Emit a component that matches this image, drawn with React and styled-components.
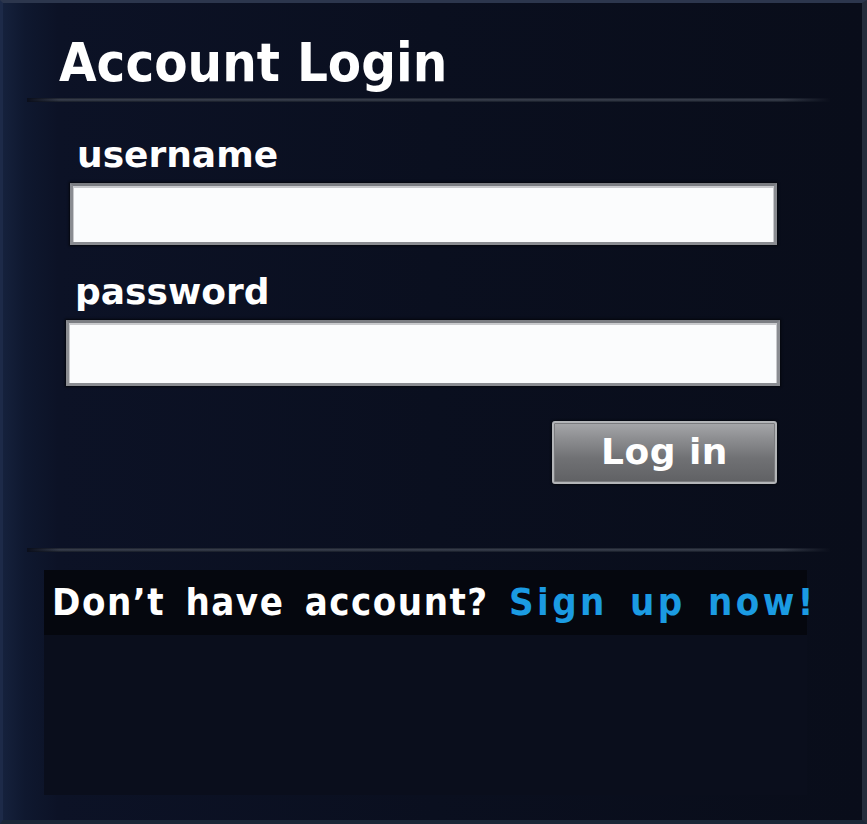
import React from 'react';
import styled, { createGlobalStyle } from 'styled-components';

const Global = createGlobalStyle`
  html, body { margin: 0; padding: 0; background: #0a0e1b; }
  #root { width: 867px; height: 824px; }
`;

const Frame = styled.div`
  box-sizing: border-box;
  width: 867px;
  height: 824px;
  border-top: 3px solid #2c364d;
  border-left: 3px solid #1d2a48;
  border-right: 5px solid #252c3b;
  border-bottom: 4px solid #1b2737;
  background: linear-gradient(90deg, #15213c 0px, #0f182f 22px, #0c1226 55px, #0a0f1f 50%, #090d1a 100%);
  display: flex;
  flex-direction: column;
  color: #fff;
  font-family: "DejaVu Sans", sans-serif;
`;

const Header = styled.header`
  padding: 29px 0 0 56px;
  height: 64px;
`;

const Title = styled.h1`
  margin: 0;
  font-family: "Liberation Sans Narrow", "DejaVu Sans Condensed", sans-serif;
  font-weight: 700;
  font-size: 54px;
  line-height: 62px;
  letter-spacing: 0;
`;

const Divider = styled.div`
  height: 4px;
  margin: ${p => p.$top}px 32px 0 24px;
  background:
    linear-gradient(90deg, rgba(10,14,27,1) 0%, rgba(10,14,27,0) 4%, rgba(10,14,27,0) 94%, rgba(10,14,27,1) 100%),
    linear-gradient(180deg, #1a1f2b 0%, #3a404e 45%, #2a303c 70%, #141925 100%);
`;

const Form = styled.form`
  display: flex;
  flex-direction: column;
  padding: 0 82px 0 63px;
  margin: 0;
`;

const Label = styled.label`
  display: block;
  margin: ${p => p.$top}px 0 0 ${p => p.$indent}px;
  font-family: "DejaVu Sans", sans-serif;
  font-weight: 700;
  font-size: 36px;
  line-height: 40px;
  height: 40px;
  letter-spacing: 0;
`;

const Input = styled.input`
  box-sizing: border-box;
  display: block;
  margin: ${p => p.$top}px ${p => p.$right}px 0 ${p => p.$indent}px;
  height: ${p => p.$h}px;
  border: 3px solid #8a8c91;
  border-top-color: #7b7d82;
  background: #fbfcfd;
  box-shadow: inset 0 1px 0 1px #c9cacd, 0 0 2px 1px #05070d;
  outline: none;
  padding: 0 12px;
  font-size: 24px;
`;

const Actions = styled.div`
  display: flex;
  justify-content: flex-end;
  margin: 35px 3px 0 0;
`;

const Button = styled.button`
  box-sizing: border-box;
  width: 225px;
  height: 63px;
  border: 2px solid #b3b5b8;
  border-radius: 3px;
  background: linear-gradient(180deg, #a6a7aa 0%, #8e8f92 25%, #707174 60%, #606164 100%);
  box-shadow: inset 0 0 0 1px #7b7c7f, 0 0 3px #000;
  color: #fff;
  font-family: "DejaVu Sans", sans-serif;
  font-weight: 700;
  font-size: 36px;
  letter-spacing: 0.5px;
  padding: 0 0 2px;
  cursor: pointer;
`;

const Footer = styled.div`
  display: flex;
  flex-direction: column;
  margin: 18px 0 0 41px;
  width: 763px;
`;

const SignupBand = styled.p`
  margin: 0;
  height: 65px;
  background: #05070e;
  font-family: "Liberation Sans Narrow", "DejaVu Sans Condensed", sans-serif;
  font-weight: 700;
  font-size: 38px;
  line-height: 64px;
  padding-left: 8px;
  word-spacing: 7px;
  letter-spacing: 1.5px;
  white-space: nowrap;
`;

const SignupLink = styled.a`
  color: #1b9be2;
  text-decoration: none;
  letter-spacing: 3.4px;
`;

const Panel = styled.div`
  height: 160px;
  background: #0a0e1c;
`;

export default function App() {
  return (
    <>
      <Global />
      <Frame>
        <Header>
          <Title>Account Login</Title>
        </Header>
        <Divider $top={2} />
        <Form onSubmit={e => e.preventDefault()}>
          <Label $top={33} $indent={11} htmlFor="username">username</Label>
          <Input id="username" type="text" $top={8} $indent={4} $right={3} $h={62} />
          <Label $top={27} $indent={9} htmlFor="password">password</Label>
          <Input id="password" type="password" $top={8} $indent={0} $right={0} $h={66} />
          <Actions>
            <Button type="submit">Log in</Button>
          </Actions>
        </Form>
        <Divider $top={64} />
        <Footer>
          <SignupBand>
            Don’t have account? <SignupLink href="#">Sign up now!</SignupLink>
          </SignupBand>
          <Panel />
        </Footer>
      </Frame>
    </>
  );
}
